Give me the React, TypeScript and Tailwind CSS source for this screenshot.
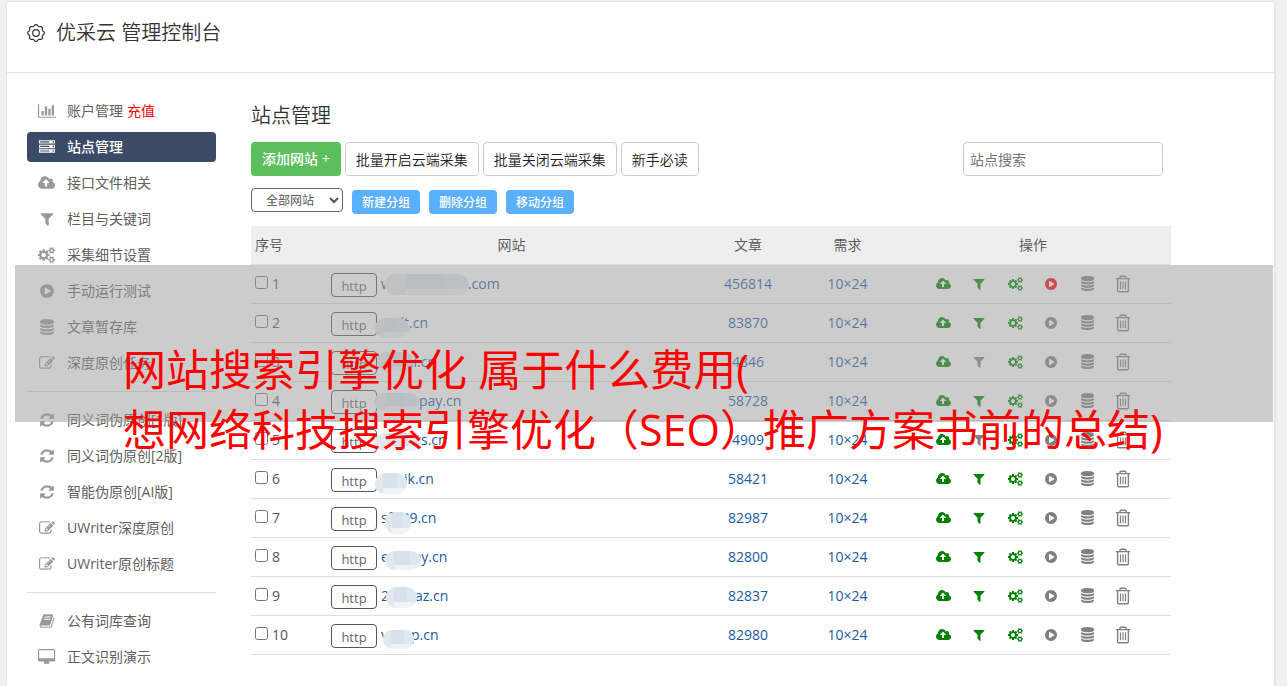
import React from "react";

type IconShape = { box: string; d: string };

const icons: Record<string, IconShape> = {
  chart: {
    box: "0 0 2048 1792",
    d: "M640 896v512h-256v-512h256zm384-512v1024h-256v-1024h256zm1024 1152v128h-2048v-1536h128v1408h1920zm-640-896v768h-256v-768h256zm384-384v1152h-256v-1152h256z",
  },
  server: {
    box: "0 0 1792 1792",
    d: "M128 1408h1024v-128h-1024v128zm0-512h1024v-128h-1024v128zm1568 448q0-40-28-68t-68-28-68 28-28 68 28 68 68 28 68-28 28-68zm-1568-960h1024v-128h-1024v128zm1568 448q0-40-28-68t-68-28-68 28-28 68 28 68 68 28 68-28 28-68zm0-512q0-40-28-68t-68-28-68 28-28 68 28 68 68 28 68-28 28-68zm96 832v384h-1792v-384h1792zm0-512v384h-1792v-384h1792zm0-512v384h-1792v-384h1792z",
  },
  upload: {
    box: "-64 0 1920 1792",
    d: "M1216 864q0-14-9-23l-352-352q-9-9-23-9t-23 9l-351 351q-10 12-10 24 0 14 9 23t23 9h224v352q0 13 9.5 22.5t22.5 9.5h192q13 0 22.5-9.5t9.5-22.5v-352h224q13 0 22.5-9.5t9.5-22.5zm640 288q0 159-112.5 271.5t-271.5 112.5h-1088q-185 0-316.5-131.5t-131.5-316.5q0-130 70-240t188-165q-2-30-2-43 0-212 150-362t362-150q156 0 285.5 87t188.5 231q71-62 166-62 106 0 181 75t75 181q0 76-41 138 130 31 213.5 135.5t83.5 238.5z",
  },
  filter: {
    box: "0 0 1792 1792",
    d: "M1595 295q17 41-14 70l-493 493v742q0 42-39 59-13 5-25 5-27 0-45-19l-256-256q-19-19-19-45v-486l-493-493q-31-29-14-70 17-39 59-39h1280q42 0 59 39z",
  },
  cogs: {
    box: "-64 0 1920 1792",
    d: "M832 896q0-106-75-181t-181-75-181 75-75 181 75 181 181 75 181-75 75-181zm768 512q0-52-38-90t-90-38-90 38-38 90q0 53 37.5 90.5t90.5 37.5 90.5-37.5 37.5-90.5zm0-1024q0-52-38-90t-90-38-90 38-38 90q0 53 37.5 90.5t90.5 37.5 90.5-37.5 37.5-90.5zm-384 421v185q0 10-7 19.5t-16 10.5l-155 24q-11 35-32 76 34 48 90 115 7 11 7 20 0 12-7 19-23 30-82.5 89.5t-78.5 59.5q-11 0-21-7l-115-90q-37 19-77 31-11 108-23 155-7 24-30 24h-186q-11 0-20-7.5t-10-17.5l-23-153q-34-10-75-31l-118 89q-7 7-20 7-11 0-21-8-144-133-144-160 0-9 7-19 10-14 41-53t47-61q-23-44-35-82l-152-24q-10-1-17-9.5t-7-19.5v-185q0-10 7-19.5t16-10.5l155-24q11-35 32-76-34-48-90-115-7-11-7-20 0-12 7-20 22-30 82-89t79-59q11 0 21 7l115 90q34-18 77-32 11-108 23-154 7-24 30-24h186q11 0 20 7.5t10 17.5l23 153q34 10 75 31l118-89q8-7 20-7 11 0 21 8 144 133 144 160 0 8-7 19-12 16-42 54t-45 60q23 48 34 82l152 23q10 2 17 10.5t7 19.5zm640 533v140q0 16-149 31-12 27-30 52 51 113 51 138 0 4-4 7-122 71-124 71-8 0-46-47t-52-68q-20 2-30 2t-30-2q-14 21-52 68t-46 47q-2 0-124-71-4-3-4-7 0-25 51-138-18-25-30-52-149-15-149-31v-140q0-16 149-31 13-29 30-52-51-113-51-138 0-4 4-7 4-2 35-20t59-34 30-16q8 0 46 46.5t52 67.5q20-2 30-2t30 2q51-71 92-112l6-2q4 0 124 70 4 3 4 7 0 25-51 138 17 23 30 52 149 15 149 31zm0-1024v140q0 16-149 31-12 27-30 52 51 113 51 138 0 4-4 7-122 71-124 71-8 0-46-47t-52-68q-20 2-30 2t-30-2q-14 21-52 68t-46 47q-2 0-124-71-4-3-4-7 0-25 51-138-18-25-30-52-149-15-149-31v-140q0-16 149-31 13-29 30-52-51-113-51-138 0-4 4-7 4-2 35-20t59-34 30-16q8 0 46 46.5t52 67.5q20-2 30-2t30 2q51-71 92-112l6-2q4 0 124 70 4 3 4 7 0 25-51 138 17 23 30 52 149 15 149 31z",
  },
  play: {
    box: "0 0 1792 1792",
    d: "M896 128q209 0 385.5 103t279.5 279.5 103 385.5-103 385.5-279.5 279.5-385.5 103-385.5-103-279.5-279.5-103-385.5 103-385.5 279.5-279.5 385.5-103zm384 823q32-18 32-55t-32-55l-544-320q-31-19-64-1-32 19-32 56v640q0 37 32 56 16 8 32 8 17 0 32-9z",
  },
  database: {
    box: "0 0 1792 1792",
    d: "M896 768q237 0 443-43t325-127v170q0 69-103 128t-280 93.5-385 34.5-385-34.5-280-93.5-103-128v-170q119 84 325 127t443 43zm0 768q237 0 443-43t325-127v170q0 69-103 128t-280 93.5-385 34.5-385-34.5-280-93.5-103-128v-170q119 84 325 127t443 43zm0-384q237 0 443-43t325-127v170q0 69-103 128t-280 93.5-385 34.5-385-34.5-280-93.5-103-128v-170q119 84 325 127t443 43zm0-1152q208 0 385 34.5t280 93.5 103 128v128q0 69-103 128t-280 93.5-385 34.5-385-34.5-280-93.5-103-128v-128q0-69 103-128t280-93.5 385-34.5z",
  },
  edit: {
    box: "0 0 1792 1792",
    d: "M888 1184l116-116-152-152-116 116v56h96v96h56zm440-720q-16-16-33 1l-350 350q-17 17-1 33t33-1l350-350q17-17 1-33zm80 594v190q0 119-84.5 203.5t-203.5 84.5h-832q-119 0-203.5-84.5t-84.5-203.5v-832q0-119 84.5-203.5t203.5-84.5h832q63 0 117 25 15 7 18 23 3 17-9 29l-49 49q-14 14-32 8-23-6-45-6h-832q-66 0-113 47t-47 113v832q0 66 47 113t113 47h832q66 0 113-47t47-113v-126q0-13 9-22l64-64q15-15 35-7t20 29zm-96-738l288 288-672 672h-288v-288zm444 132l-92 92-288-288 92-92q28-28 68-28t68 28l152 152q28 28 28 68t-28 68z",
  },
  refresh: {
    box: "0 0 1792 1792",
    d: "M1639 1056q0 5-1 7-64 268-268 434.5t-478 166.5q-146 0-282.5-55t-243.5-157l-129 129q-19 19-45 19t-45-19-19-45v-448q0-26 19-45t45-19h448q26 0 45 19t19 45-19 45l-137 137q71 66 161 102t187 36q134 0 250-65t186-179q11-17 53-117 8-23 30-23h192q13 0 22.5 9.5t9.5 22.5zm25-800v448q0 26-19 45t-45 19h-448q-26 0-45-19t-19-45 19-45l138-138q-148-137-349-137-134 0-250 65t-186 179q-11 17-53 117-8 23-30 23h-199q-13 0-22.5-9.5t-9.5-22.5v-7q65-268 270-434.5t480-166.5q146 0 284 55.5t245 156.5l130-129q19-19 45-19t45 19 19 45z",
  },
  book: {
    box: "0 0 1792 1792",
    d: "M1703 478q40 57 18 129l-275 906q-19 64-76.5 107.5t-122.5 43.5h-923q-77 0-148.5-53.5t-99.5-131.5q-24-67-2-127 0-4 3-27t4-37q1-8-3-21.5t-3-19.5q2-11 8-21t16.5-23.5 16.5-23.5q23-38 45-91.5t30-91.5q3-10 .5-30t-.5-28q3-11 17-28t17-23q21-36 42-92t25-90q1-9-2.5-32t.5-28q4-13 22-30.5t22-22.5q19-26 42.5-84.5t27.5-96.5q1-8-3-25.5t-2-26.5q2-8 9-18t18-23 17-21q8-12 16.5-30.5t15-35 16-36 19.5-32 26.5-23.5 36-11.5 47.5 5.5l-1 3q38-9 51-9h761q74 0 114 56t18 130l-274 906q-36 119-71.5 153.5t-128.5 34.5h-869q-27 0-38 15-11 16-1 43 24 70 144 70h923q29 0 56-15.5t35-41.5l300-987q7-22 5-57 38 15 59 43zm-1064 2q-4 13 2 22.5t20 9.5h608q13 0 25.5-9.5t16.5-22.5l21-64q4-13-2-22.5t-20-9.5h-608q-13 0-25.5 9.5t-16.5 22.5zm-83 256q-4 13 2 22.5t20 9.5h608q13 0 25.5-9.5t16.5-22.5l21-64q4-13-2-22.5t-20-9.5h-608q-13 0-25.5 9.5t-16.5 22.5z",
  },
  desktop: {
    box: "-64 0 1920 1792",
    d: "M1728 992v-832q0-13-9.5-22.5t-22.5-9.5h-1600q-13 0-22.5 9.5t-9.5 22.5v832q0 13 9.5 22.5t22.5 9.5h1600q13 0 22.5-9.5t9.5-22.5zm128-832v1088q0 66-47 113t-113 47h-544q0 37 16 77.5t32 71 16 43.5q0 26-19 45t-45 19h-512q-26 0-45-19t-19-45q0-14 16-44t32-70 16-78h-544q-66 0-113-47t-47-113v-1088q0-66 47-113t113-47h1600q66 0 113 47t47 113z",
  },
};

function Icon({ name, className }: { name: string; className: string }) {
  const icon = icons[name];
  return (
    <svg viewBox={icon.box} className={`w-auto shrink-0 fill-current ${className}`} aria-hidden="true">
      <path d={icon.d} />
    </svg>
  );
}

function TrashIcon() {
  return (
    <svg viewBox="0 0 16 18" className="h-[18px] w-4" fill="none" stroke="currentColor" strokeWidth="1.4" aria-hidden="true">
      <path d="M.8 3.6h14.4M5 3.6V2.2Q5 1.2 6 1.2h4q1 0 1 1v1.4M2.6 3.6v12q0 1.2 1.2 1.2h8.4q1.2 0 1.2-1.2v-12" />
      <path d="M5.5 6.4v7.8M8 6.4v7.8M10.5 6.4v7.8" strokeWidth="1.2" />
    </svg>
  );
}

const gearPath =
  Array.from({ length: 96 }, (_, i) => {
    const a = (i / 96) * Math.PI * 2;
    const wave = Math.cos(a * 8);
    const r = 7.7 + 0.65 * Math.sign(wave) * Math.sqrt(Math.abs(wave));
    return `${i ? "L" : "M"}${(9 + r * Math.sin(a)).toFixed(2)} ${(9 - r * Math.cos(a)).toFixed(2)}`;
  }).join("") + "Z";

function GearIcon() {
  return (
    <svg viewBox="0 0 18 18" className="size-[18px]" fill="none" stroke="currentColor" strokeWidth="1.2" strokeLinejoin="round" aria-hidden="true">
      <path d={gearPath} />
      <circle cx="9" cy="9" r="3.3" />
    </svg>
  );
}

type NavItem = { icon: string; label: string; note?: string; active?: boolean };

const navGroups: NavItem[][] = [
  [
    { icon: "chart", label: "账户管理", note: "充值" },
    { icon: "server", label: "站点管理", active: true },
    { icon: "upload", label: "接口文件相关" },
    { icon: "filter", label: "栏目与关键词" },
    { icon: "cogs", label: "采集细节设置" },
    { icon: "play", label: "手动运行测试" },
    { icon: "database", label: "文章暂存库" },
    { icon: "edit", label: "深度原创任务" },
  ],
  [
    { icon: "refresh", label: "同义词伪原创[1版]" },
    { icon: "refresh", label: "同义词伪原创[2版]" },
    { icon: "refresh", label: "智能伪原创[AI版]" },
    { icon: "edit", label: "UWriter深度原创" },
    { icon: "edit", label: "UWriter原创标题" },
  ],
  [
    { icon: "book", label: "公有词库查询" },
    { icon: "desktop", label: "正文识别演示" },
  ],
];

type Site = {
  prefix: string;
  gap: string;
  suffix: string;
  articles: string;
  filterOff?: boolean;
  running?: boolean;
  // Redaction patch: left, top, width, height inside the link box
  patch: [number, number, number, number];
};

const sites: Site[] = [
  { prefix: "w", gap: "w-[76px]", suffix: ".com", articles: "456814", running: true, patch: [4, 9, 84, 21] },
  { prefix: "", gap: "w-[16px]", suffix: "ilt.cn", articles: "83870", patch: [-6, 14, 34, 20] },
  { prefix: "", gap: "w-[24px]", suffix: "ni.cn", articles: "4846", filterOff: true, patch: [-4, 9, 36, 19] },
  { prefix: "", gap: "w-[38px]", suffix: "pay.cn", articles: "58728", patch: [-7, 11, 45, 18] },
  { prefix: "", gap: "w-[35px]", suffix: "ts.cn", articles: "4909", filterOff: true, patch: [-6, 12, 46, 18] },
  { prefix: "", gap: "w-[23px]", suffix: "ik.cn", articles: "58421", patch: [-6, 13, 32, 21] },
  { prefix: "sf", gap: "w-[9px]", suffix: "39.cn", articles: "82987", patch: [4, 13, 26, 22] },
  { prefix: "e", gap: "w-[24px]", suffix: "oy.cn", articles: "82800", patch: [4, 13, 36, 19] },
  { prefix: "2", gap: "w-[26px]", suffix: "az.cn", articles: "82837", patch: [5, 10, 31, 21] },
  { prefix: "v", gap: "w-[23px]", suffix: "p.cn", articles: "82980", patch: [2, 14, 31, 19] },
];

function Patch({ id, area }: { id: string; area: Site["patch"] }) {
  const [x, y, w, h] = area;
  const top = Math.round(h * 0.62);
  return (
    <svg viewBox="-8 0 104 38" className="absolute top-0 -left-2 h-[38px] w-[104px]" aria-hidden="true">
      <clipPath id={id}>
        <rect x={x} y={y} width={w} height={h} rx={Math.min(12, h / 2)} />
      </clipPath>
      <g clipPath={`url(#${id})`}>
        <rect x={x} y={y} width={w} height={h} fill="#eff2f6" />
        <rect x={x} y={y} width={w * 0.25} height={h} fill="#e4e8ec" />
        <rect x={x + w * 0.25} y={y} width={w * 0.45} height={top + 2} fill="#d8e2ec" />
        <rect x={x + w * 0.7} y={y} width={w * 0.3} height={top + 2} fill="#dfe7f0" />
      </g>
    </svg>
  );
}

function Sidebar() {
  return (
    <nav className="w-[189px] shrink-0 pt-[23px] text-sm text-[#606060]">
      {navGroups.map((group, g) => (
        <ul key={g} className={g ? "mt-[13px] flex flex-col gap-1.5 border-t border-[#ddd] pt-[13px]" : "flex flex-col gap-1.5"}>
          {group.map((item) => (
            <li key={item.label}>
              <a
                href="#"
                className={
                  item.active
                    ? "flex h-[30px] items-center rounded bg-[#3b4a66] pl-2.5 font-medium text-white"
                    : "flex h-[30px] items-center pl-2.5"
                }
              >
                <span className={item.active ? "mr-2.5 flex w-5 justify-center" : "mr-2.5 flex w-5 justify-center text-[#999]"}>
                  <Icon name={item.icon} className="h-4" />
                </span>
                {item.label}
                {item.note && <span className="ml-1 text-[#f00]">{item.note}</span>}
              </a>
            </li>
          ))}
        </ul>
      ))}
    </nav>
  );
}

function Toolbar() {
  const plain = "h-[34px] rounded border border-[#ccc] bg-white px-2.5 pt-0.5 font-[350] text-[#222]";
  return (
    <>
      <div className="mt-3 flex items-center gap-1 text-sm">
        <button className="h-[34px] rounded bg-[#5cbf5c] px-[11px] font-medium text-white">添加网站 +</button>
        <button className={plain}>批量开启云端采集</button>
        <button className={plain}>批量关闭云端采集</button>
        <button className={plain}>新手必读</button>
        <input
          type="search"
          aria-label="站点搜索"
          placeholder="站点搜索"
          className="mr-2 ml-auto h-[34px] w-[200px] rounded border border-[#ccc] bg-white px-1.5 placeholder:text-[#757575]"
        />
      </div>
      <div className="mt-3 flex h-[26px] items-start gap-[9px] text-xs">
        <select aria-label="网站分组" className="h-6 w-[92px] rounded border border-[#666] bg-white pl-2.5 text-[#555]">
          <option>全部网站</option>
        </select>
        {["新建分组", "删除分组", "移动分组"].map((label) => (
          <button key={label} className="mt-0.5 h-6 rounded bg-[#5aafff] px-2.5 pt-0.5 font-medium text-white">
            {label}
          </button>
        ))}
      </div>
    </>
  );
}

function SiteRow({ site, index }: { site: Site; index: number }) {
  const action = "flex w-9 justify-center";
  return (
    <tr className="border-b border-[#ddd]">
      <td className="p-0 pl-1">
        <label className="flex h-[38px] items-center gap-1">
          <input type="checkbox" className="mb-0.5 size-[13px]" />
          {index + 1}
        </label>
      </td>
      <td className="p-0 pl-1">
        <div className="flex h-[38px] items-center gap-1">
          <button className="mt-0.5 h-6 w-[46px] rounded border border-[#555] bg-white text-[13px] leading-6 text-[#666]">http</button>
          <a href="#" className="relative flex h-[38px] items-center text-[#1a5a9e]">
            <span>{site.prefix}</span>
            <span className={site.gap} />
            <span>{site.suffix}</span>
            <Patch id={`patch-${index}`} area={site.patch} />
          </a>
        </div>
      </td>
      <td className="p-0 text-center">
        <a href="#" className="text-[#1a5a9e]">{site.articles}</a>
      </td>
      <td className="p-0 text-center">
        <a href="#" className="text-[#1a5a9e]">10×24</a>
      </td>
      <td className="p-0">
        <div className="flex items-center justify-center text-[#808080]">
          <button aria-label="接口" className={`${action} text-[#008000]`}>
            <Icon name="upload" className="h-3.5" />
          </button>
          <button aria-label="栏目" className={site.filterOff ? action : `${action} text-[#008000]`}>
            <Icon name="filter" className="h-3.5" />
          </button>
          <button aria-label="设置" className={`${action} text-[#008000]`}>
            <Icon name="cogs" className="h-3.5" />
          </button>
          <button aria-label="运行" className={site.running ? `${action} text-[#f00]` : action}>
            <Icon name="play" className="h-3.5" />
          </button>
          <button aria-label="暂存库" className={action}>
            <Icon name="database" className="h-[15px]" />
          </button>
          <button aria-label="删除" className={action}>
            <TrashIcon />
          </button>
        </div>
      </td>
    </tr>
  );
}

function SiteTable() {
  return (
    <table className="mt-3 w-full table-fixed border-collapse text-sm text-[#555]">
      <colgroup>
        <col className="w-[76px]" />
        <col />
        <col className="w-[104px]" />
        <col className="w-[95px]" />
        <col className="w-[276px]" />
      </colgroup>
      <thead>
        <tr className="h-[38px] border-b border-[#ddd] bg-[#eee]">
          <th className="p-0 pl-1 text-left font-[350]">序号</th>
          <th className="p-0 font-[350]">网站</th>
          <th className="p-0 font-[350]">文章</th>
          <th className="p-0 font-[350]">需求</th>
          <th className="p-0 font-[350]">操作</th>
        </tr>
      </thead>
      <tbody>
        {sites.map((site, i) => (
          <SiteRow key={i} site={site} index={i} />
        ))}
      </tbody>
    </table>
  );
}

export default function App() {
  return (
    <div className="relative flex min-h-screen overflow-hidden bg-[#f0f0f0] pt-px pr-[11px] pl-1.5 font-['Open_Sans','Noto_Sans_CJK_SC',sans-serif] text-[#333]">
      <div className="flex-1 rounded-t border border-r-2 border-b-0 border-[#e5e5e5] bg-white">
        <header className="flex h-[71px] items-center gap-[11px] border-b border-[#e5e5e5] pb-2 pl-5">
          <GearIcon />
          <h1 className="text-xl font-[350]">优采云 管理控制台</h1>
        </header>
        <div className="flex gap-[35px] pr-[103px] pb-3 pl-5">
          <Sidebar />
          <main className="min-w-0 flex-1 pt-[29px]">
            <h2 className="text-xl font-[350]">站点管理</h2>
            <Toolbar />
            <SiteTable />
          </main>
        </div>
      </div>
      <div className="pointer-events-none absolute top-[265px] right-3.5 left-[15px] h-[157px] bg-[#999]/50 pt-[75px] pl-[108px]">
        <p className="text-[43px] leading-[60px] whitespace-nowrap text-[#f00]">
          网站搜索引擎优化 属于什么费用(
          <br />
          想网络科技搜索引擎优化（SEO）推广方案书前的总结)
        </p>
      </div>
    </div>
  );
}
